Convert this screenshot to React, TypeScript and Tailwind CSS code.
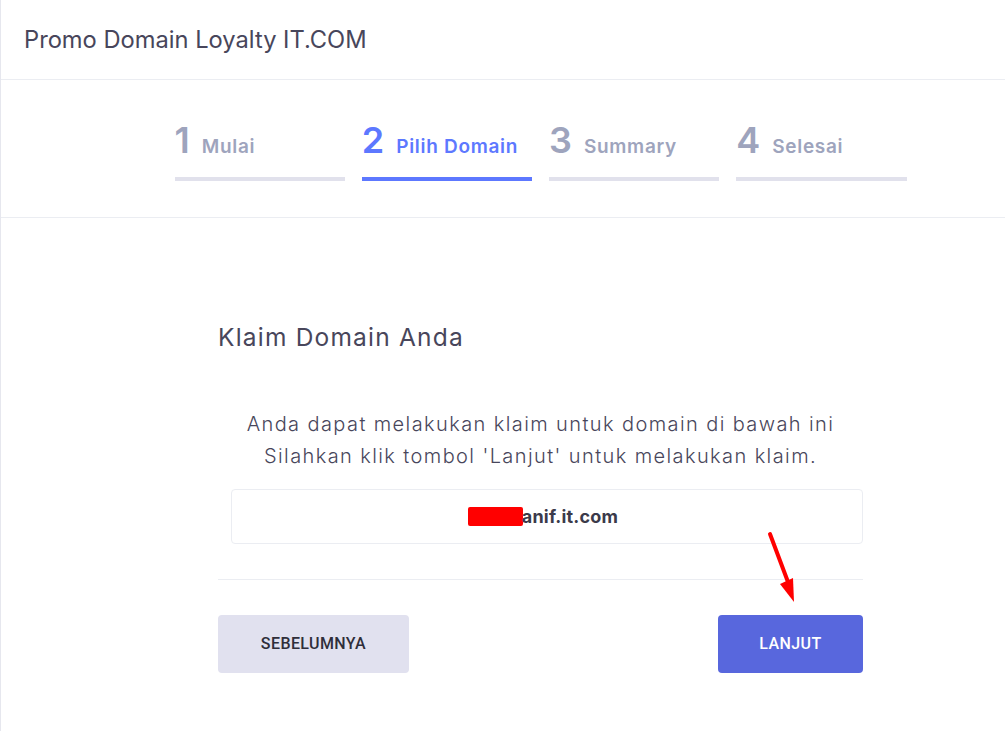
import React from 'react';

const steps = [
  { no: '1', label: 'Mulai', active: false },
  { no: '2', label: 'Pilih Domain', active: true },
  { no: '3', label: 'Summary', active: false },
  { no: '4', label: 'Selesai', active: false },
];

const font = { fontFamily: 'Inter, "Open Sans", sans-serif' };
const btnFont = { fontFamily: 'Roboto, "Liberation Sans", sans-serif' };

function RedArrow() {
  return (
    <svg className="absolute left-[530px] top-[36px] pointer-events-none" width="40" height="80" viewBox="0 0 40 80">
      <line x1="8" y1="8" x2="26" y2="56" stroke="#ff0000" strokeWidth="4" strokeLinecap="round" />
      <polygon points="18,58 31,52 32,76" fill="#ff0000" />
    </svg>
  );
}

export default function App() {
  return (
    <div className="w-[1005px] h-[731px] overflow-hidden bg-white text-[#48465b]" style={font}>
      <div className="w-[1080px] min-h-[731px] border-l border-[#e6e7ee]">
        <div className="h-[80px] px-[23px] flex items-center border-b border-[#ebedf2]">
          <h1 className="text-[23.7px] font-normal">Promo Domain Loyalty IT.COM</h1>
        </div>

        <div className="h-[138px] border-b border-[#ebedf2] pt-[40px]">
          <div className="w-[732px] mx-auto grid grid-cols-4 gap-[17px]">
            {steps.map((s) => (
              <div key={s.no}>
                <div className={`flex items-baseline gap-[12px] h-[40px] ${s.active ? 'text-[#5d78ff]' : 'text-[#9ea4bd]'}`}>
                  <span className="text-[36px] leading-[40px] font-semibold">{s.no}</span>
                  <span className="text-[19px] font-semibold tracking-[0.7px]">{s.label}</span>
                </div>
                <div className={`mt-[17px] h-[4px] ${s.active ? 'bg-[#5d78ff]' : 'bg-[#e1e1ec]'}`} />
              </div>
            ))}
          </div>
        </div>

        <div className="w-[645px] mx-auto pt-[103px]">
          <h2 className="text-[24.5px] leading-[32px] font-normal tracking-[1.2px]">Klaim Domain Anda</h2>
          <p className="mt-[55px] text-center text-[20px] leading-[32px] font-light tracking-[1.4px]">
            Anda dapat melakukan klaim untuk domain di bawah ini
            <br />
            Silahkan klik tombol 'Lanjut' untuk melakukan klaim.
          </p>
          <div className="relative mt-[17px] ml-[13px] h-[55px] border border-[#ebedf2] rounded-[4px] flex items-center justify-center">
            <span className="text-[18px] font-bold text-[#3b3a4a] flex items-center tracking-[0.2px] pr-[8px]">
              <span className="inline-block w-[55px] h-[19px] bg-[#ff0000] rounded-[2px] mr-[-1px]" />
              anif.it.com
            </span>
            <RedArrow />
          </div>
          <div className="mt-[35px] border-t border-[#ebedf2]" />
          <div className="mt-[35px] flex justify-between">
            <button className="w-[191px] h-[58px] rounded-[4px] bg-[#e1e1ef] text-[#2f2e3a] text-[16px] font-medium tracking-[0.4px]" style={btnFont}>
              SEBELUMNYA
            </button>
            <button className="w-[145px] h-[58px] rounded-[4px] bg-[#5867dd] text-white text-[16px] font-medium tracking-[0.4px]" style={btnFont}>
              LANJUT
            </button>
          </div>
        </div>
      </div>
    </div>
  );
}
